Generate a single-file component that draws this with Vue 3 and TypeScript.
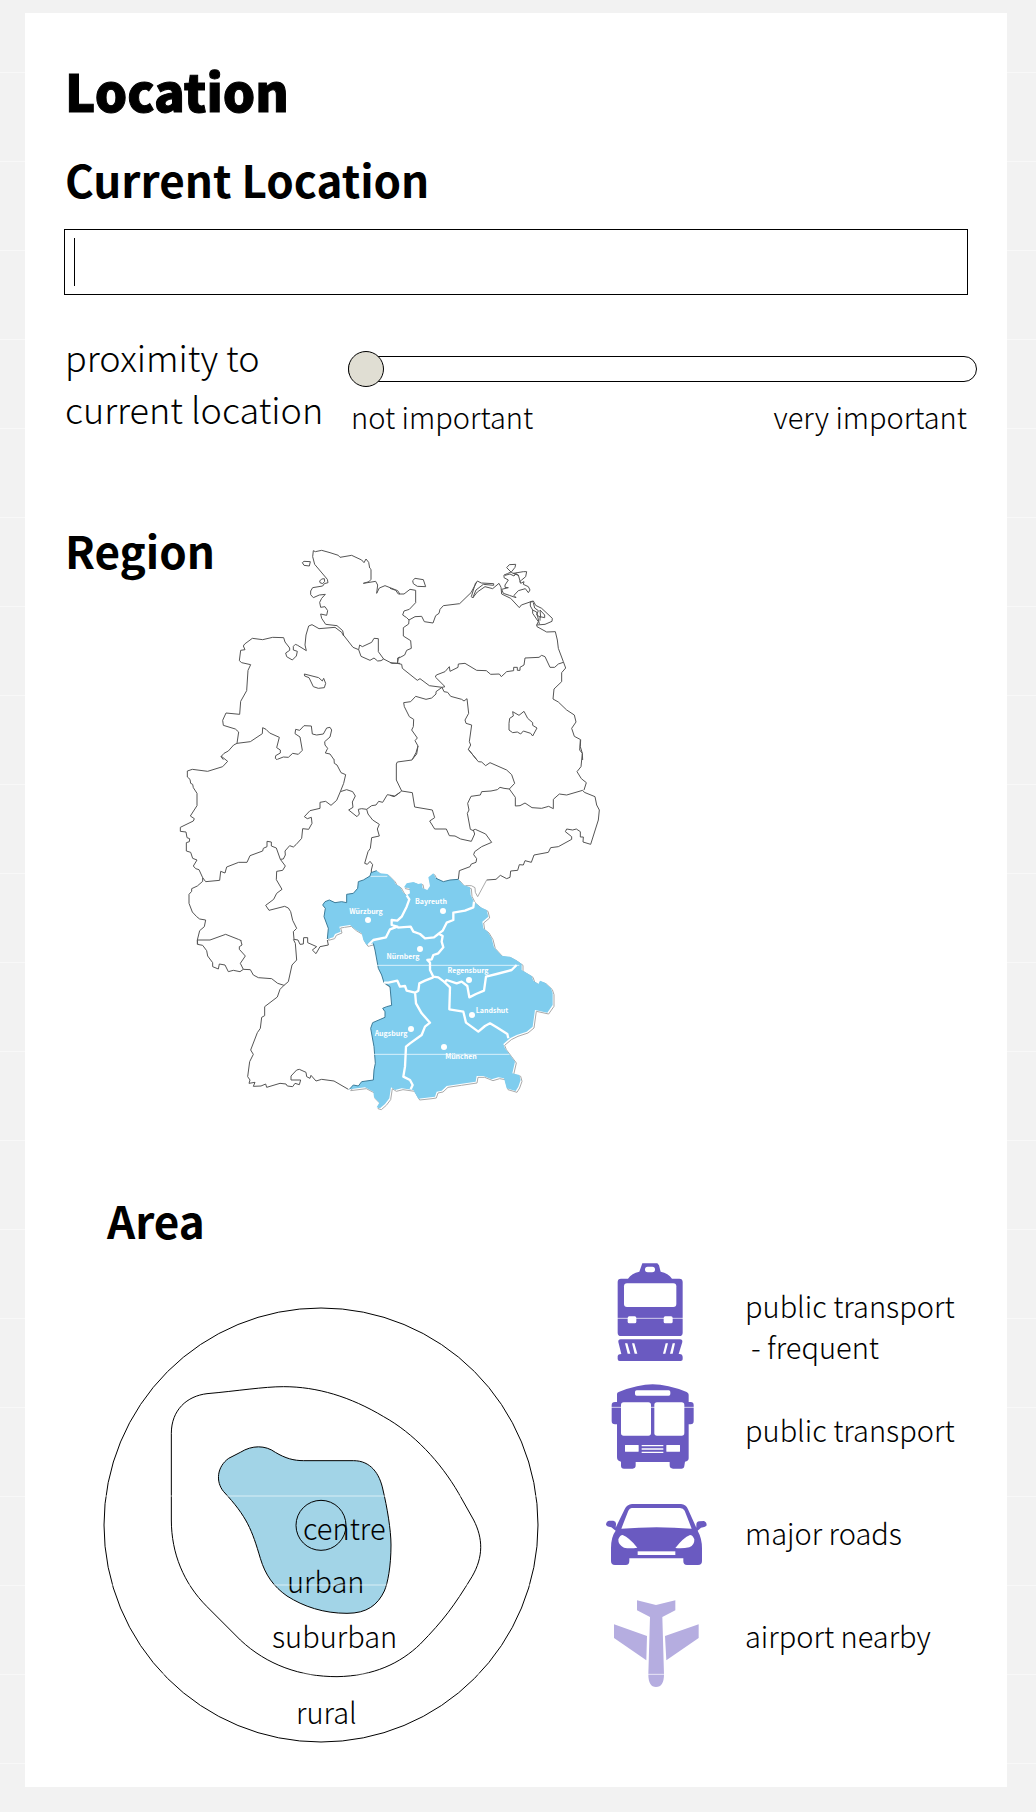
<script setup lang="ts">
import { ref } from 'vue'

interface City {
  name: string
  dot: [number, number]
  label: [number, number]
}

const currentLocation = ref('')
const proximity = ref(0)

const cities: City[] = [
  { name: 'Würzburg', dot: [368, 920], label: [366, 914] },
  { name: 'Bayreuth', dot: [443, 911], label: [431, 904] },
  { name: 'Nürnberg', dot: [420, 949], label: [403, 959] },
  { name: 'Regensburg', dot: [469, 980], label: [468, 973] },
  { name: 'Landshut', dot: [472, 1015], label: [492, 1013] },
  { name: 'Augsburg', dot: [411, 1029], label: [391, 1036] },
  { name: 'München', dot: [444, 1047], label: [461, 1059] },
]

const bavaria =
  'M45 125L58 120L75 128L95 125L110 128V103L130 100L143 85L145 65L160 60L180 48L183 38L200 32L210 40L232 42L252 62L257 72L270 80L280 98L290 106L300 100L298 85L282 82L290 70L310 66L325 72L335 70L338 85L352 90L360 78L355 52L370 40L378 55L400 65L420 60L445 58L460 75L480 82L482 105L492 125L512 142L530 150L535 170L517 185L520 205L533 215L545 235L552 262L575 287L600 290L618 300L635 312L635 330L665 348L670 362L685 372L690 362L705 368L723 385L728 400V435L712 458L675 450L668 500L650 515L620 525L600 535L580 552L585 565L600 585L615 605L607 640L628 645L632 660L625 680L617 693L590 685L582 655L565 652L545 658L520 648H500L497 665L450 672L410 678L395 692L380 695L375 710L362 712L325 716L310 690L275 685L255 690L243 682L238 715L225 732L210 745L200 742L208 728L192 712L190 695L165 682L118 688L130 675L145 678L155 665L190 660L192 630L196 610L192 560L182 505L188 488L225 472V455L218 445L230 440L245 436L240 380L222 368L215 345L205 325L195 270L190 250L170 255L160 240L155 220L135 208L120 195L100 198L88 200L92 215L75 222L70 232L52 237L55 205L42 170L46 145L38 135Z'
</script>

<template>
  <div class="page">
    <main class="card">
      <h1>Location</h1>

      <section>
        <h2 class="current-title"><label for="current-location">Current Location</label></h2>
        <div class="field">
          <input id="current-location" v-model="currentLocation" type="text" />
          <span v-if="!currentLocation" class="caret" aria-hidden="true"></span>
        </div>

        <div class="proximity">
          <label for="proximity" class="proximity-label">proximity to<br />current location</label>
          <div class="slider">
            <input id="proximity" v-model.number="proximity" type="range" min="0" max="100" />
            <div class="scale">
              <span>not important</span>
              <span>very important</span>
            </div>
          </div>
        </div>
      </section>

      <section class="region">
        <h2>Region</h2>
        <svg class="map" viewBox="170 540 440 580" role="img" aria-label="Map of Germany with Bavaria selected">
          <svg class="borders" x="170" y="530" width="230" height="230" viewBox="0 0 690 690">
            <path d="M430 62L436 65L455 61L480 68L505 76L510 82L545 76L575 90L582 98L588 87L596 97L599 114L603 118V148L597 155L580 160L617 154L623 165L620 190L628 174L645 167L683 182L690 193" />
            <path d="M430 62L428 80L434 103L472 148L474 158L463 161L458 168L428 173L422 183V194L430 203L448 195L466 193L455 205L449 217L452 232L465 230L473 242L470 256L452 252L455 265L467 283L501 287L518 302L521 316L549 352L566 359" />
            <path d="M409 362L405 345L408 315L416 288L426 284L447 296L495 292L515 307L521 318" />
            <path d="M397 98L402 106L418 108L421 95L402 94ZM449 153L455 147L463 146L464 154L458 161L450 158Z" />
            <path d="M409 362L383 346L376 343L370 349V360L382 364L379 378L367 390L350 380L347 369L359 361V354L345 336L341 323L308 322L278 329L247 325L224 342L220 348L225 359L212 361L208 392L215 398L242 404L234 421L230 482L212 514L209 553L168 549L158 571L160 586L196 597L206 606L201 640L241 635L277 611L278 593L288 598L299 609L328 622L320 653L331 660V669L317 677L316 685L322 690" />
            <path d="M403 432L446 443L457 453L461 445L467 460L463 473L445 475L430 470L417 443L404 438Z" />
            <path d="M566 359L569 345L577 350L605 337L612 325L625 326V365L641 387L633 392L623 393L612 384L600 391L573 379L566 359M641 387L666 400H690M683 400V384L690 381" />
            <path d="M201 640L191 645L175 663L162 670L153 680L160 689" />
            <path d="M322 688L340 681L355 682L368 670L385 673L397 661L390 621L375 611L377 598L389 601L402 587L424 588L427 612L440 615L460 612L470 594L480 592L485 600L480 621L464 635L465 645L473 655L466 669L480 672L492 689" />
          </svg>
          <svg class="borders" x="390" y="530" width="230" height="230" viewBox="0 0 690 690">
            <path d="M0 175L17 181L25 192H42L60 178L77 181V218L58 238L42 243L38 255L50 263L57 270L56 282L40 293V318L62 332L64 355L50 361L44 375L25 385L22 400L0 398" />
            <path d="M68 152L75 145L100 149L107 170L82 169L70 161Z" />
            <path d="M57 270L75 260L95 259L103 275L129 279L137 257L147 250L150 238L160 227L209 221L243 188L262 153L274 159L311 161V166L280 163L258 180L248 204L244 200L250 180L257 158M248 204L262 186L285 170L308 176L327 160L333 172L335 192L362 205L388 233L394 225L420 216L430 215" />
            <path d="M350 113L358 104L377 103L375 112L365 125L352 131L342 135V143L355 150L345 165V172L355 173L335 178L340 190L358 196L378 203L372 196L385 182L406 176L415 188L420 180L415 170L400 163L402 155L392 160L385 135L370 130L400 125L410 125L407 140L395 150L388 156M350 113L365 128L385 136M345 136L360 132L372 138L380 128" />
            <path d="M421 215L430 213L437 226L455 235L487 265L486 274L465 283L440 285L445 275L428 250V240L421 228ZM430 218L434 234L445 242L440 255L452 262L450 240L464 255V263L450 260V272M428 240L440 246L448 282M440 285L441 290L470 306L496 305L502 330L505 355L520 395L527 414L515 428V455L492 477L489 507L505 516L530 540L553 555L558 576L545 595L553 619L572 629L571 650L577 670L578 690" />
            <path d="M520 397L505 402L494 412H480L465 380L455 376L447 382L405 384L402 405L390 412V421H382V412H371V422L350 425L334 440L328 432L302 433L289 422L260 421L225 400L205 402L204 412L180 424L178 410L165 425L139 435L136 441L165 470L156 472L118 467L90 446L82 451L37 415L35 403L22 400" />
            <path d="M156 472L138 485V492L125 504L108 508L77 499L62 515L41 518L43 530L58 560L71 568L70 590L65 600L82 624L75 632L84 648L80 672L67 688" />
            <path d="M156 472L162 485L173 487L182 499L215 508L222 513L231 506L236 550L225 570L228 580L245 585L238 635L242 645L235 658L260 689" />
            <path d="M368 545L387 556L402 544L413 565L428 578V586L441 594L428 618L422 610L400 603L392 612L382 606L368 608L357 600V580L359 565L370 558Z" />
          </svg>
          <svg class="borders" x="170" y="740" width="230" height="230" viewBox="0 0 690 690">
            <path d="M153 48L173 64L158 80L113 94L67 88L52 93V111L60 118L62 130L68 133L70 143L81 160V197L61 228L73 236L70 243L31 262V274L48 276L51 293L59 296L58 305L49 308V333L62 337L68 355L81 360L70 378L77 386L87 389L98 413V424L82 438L65 446V454L57 463V490L67 516L80 530L89 537L107 540L103 560L89 572L82 600L83 612" />
            <path d="M492 58L493 70L501 75L513 98L527 104L521 130L511 155L500 181L483 196L467 184L450 187V205L420 212L403 230L412 236L424 232L426 250L416 268L398 266L395 295L378 314L370 321L359 317L345 333L346 345L340 357L331 358" />
            <path d="M331 358L319 324L304 318V306L291 304V320L280 325L278 333L240 347L231 367L206 367L170 381L165 399L152 394L149 421L107 425L98 413" />
            <path d="M331 358L346 378L338 391L320 394L319 419L336 448L320 460L311 478L287 496L297 511L344 499L355 504L362 515L368 541L380 565L370 575L372 598" />
            <path d="M82 600H120L167 583L205 598L214 602" />
            <path d="M372 598L384 600L390 613L400 612L401 593H413V608L440 620L427 630L438 641L450 620L475 615L472 600" />
            <path d="M511 155L530 149L548 155L556 168L547 186L549 202L536 210L561 230L568 222L565 208L575 206L590 208L594 222L608 240L628 253L622 267L628 288L605 293L601 325L594 335L584 370L592 373L600 364L608 374L604 390V405" />
            <path d="M590 208L605 197L618 195L626 184L638 187L652 164L674 168L690 157" />
          </svg>
          <svg class="borders" x="390" y="740" width="230" height="200" viewBox="0 0 690 600">
            <path d="M84 18L78 38L66 60L22 66L19 72V120L35 153L20 165L12 170L0 166" />
            <path d="M35 153L67 158L74 201L127 210L134 233L119 243L134 267H169L178 287L195 288L212 297L244 304L254 282L250 270L256 268L287 282L305 307L275 320L254 335L251 344L260 356L258 367L244 372L240 380L208 392L205 418" />
            <path d="M235 28L265 65L275 66L287 77L300 68L350 90L365 104L374 130L358 147L342 145L330 142L322 149L303 153L275 155L271 165L243 169L233 190L237 210L232 220L241 268L250 272" />
            <path d="M358 147L376 172V198L390 197L405 189L426 203L455 205L476 199L490 206V178L508 162L530 165L578 151L583 157L615 170L620 195L628 210L625 240L602 313L579 306L580 291H571V275L559 267L548 270L530 267L526 275L545 290V298L505 320L482 323L475 337L432 345L424 367L405 362L400 375L388 374L383 391L362 393L360 412L350 416L331 406L318 418L290 420" />
            <path class="faint" d="M290 420L263 470L256 457L255 443L244 437H226" />
            <path d="M571 0L569 30L577 40L573 80L561 95L574 116L589 128L582 150" />
          </svg>
          <svg class="borders" x="180" y="900" width="200" height="220" viewBox="0 0 600 660">
            <path d="M52 121V133L68 136L80 152L83 168L98 188V200L115 207L118 192L135 195L145 215L160 211L180 215L190 208L181 190L196 168L178 148V140L186 135L182 120" />
            <path d="M190 208L211 209L220 225L235 233L275 236L293 250L312 256L325 245L336 195L350 180L346 130L340 118" />
            <path d="M312 256L300 268L292 291L254 320V347L245 352L241 385L232 398L212 450L220 463L209 485L203 530L210 540L207 550L225 547L220 559L243 558L257 552L260 562L300 550L318 552L322 558L338 560L345 550L358 554L362 540L333 540V528L350 510L358 508L378 517L380 530L390 535L393 526L408 543L425 538L462 543L505 568" />
          </svg>
          <svg class="bavaria" x="310" y="860" width="260" height="260" viewBox="0 0 780 780">
            <path class="shadow-line" transform="translate(4 4)" :d="bavaria" />
            <path class="state" :d="bavaria" />
            <path class="coast" d="M118 688L130 675L145 678L155 665L190 660L192 630L196 610L192 560L182 505L188 488L225 472V455L218 445L230 440L245 436L240 380L222 368L215 345L205 325L195 270L190 250M52 237L55 205L42 170L46 145L38 135L45 125L58 120L75 128L95 125L110 128V103L130 100L143 85L145 65L160 60L180 48L183 38L200 32M378 55L400 65L420 60L445 58" />
            <path class="district" d="M290 106L298 118L290 140L275 170L262 182L245 180V195L262 200L240 208L228 232L190 240L175 255M262 203L302 200L310 215L330 222L345 235L372 232L385 222L398 212L410 188L430 180V158L465 152L490 142L492 125M388 222L398 228L395 245L400 262L385 280L370 285L365 298L352 300L360 308V330L370 350L385 352L402 365L420 382L418 448L460 455L468 488L505 515L525 498L540 490L560 502L592 522L595 535M402 370L410 360L440 370L455 365L472 378L478 412L498 402L522 392L528 350L560 342L605 330L620 315M370 352L345 362L328 370L325 392L315 398L290 392L285 378L270 380L262 362L235 368L222 368M315 395L318 430L335 460L360 488L345 500L335 525L300 550L288 560L285 620L280 650L300 660L308 675L302 688" />
            <path class="seam" d="M182 49H232M200 316H628M192 583H598" />
          </svg>
          <g v-for="city in cities" :key="city.name" class="city">
            <circle :cx="city.dot[0]" :cy="city.dot[1]" r="3" />
            <text :x="city.label[0]" :y="city.label[1]">{{ city.name }}</text>
          </g>
        </svg>
      </section>

      <section class="area">
        <div class="zones">
          <h2>Area</h2>
          <svg class="rings" viewBox="0 0 436 436" role="img" aria-label="Area types from centre to rural">
            <svg class="ring-lines" width="436" height="436" viewBox="38 51 1308 1308">
              <circle cx="692" cy="705" r="651" />
              <path d="M350 311C290 318 243 360 243 430V690C243 790 280 880 350 950L450 1050C530 1125 630 1160 740 1160C850 1158 930 1120 990 1062C1060 990 1090 950 1145 860C1180 800 1178 745 1150 690L1105 610C1050 515 970 430 880 380C780 320 680 290 580 290C520 290 440 303 350 311Z" />
              <path class="chosen" d="M450 487C485 465 525 465 555 487C585 505 610 512 640 512H790C840 512 868 550 878 600C890 650 902 720 902 765C902 830 892 880 882 903C862 945 830 970 770 970C700 970 640 950 590 918C550 890 525 855 510 805C485 720 470 680 400 605C375 575 380 530 415 505Z" />
              <circle cx="692" cy="706" r="75" />
            </svg>
            <text x="200" y="233">centre</text>
            <text x="184" y="286">urban</text>
            <text x="169" y="341">suburban</text>
            <text x="193" y="417">rural</text>
            <path class="seam" d="M0 189H436M0 278H436M0 367H436" />
          </svg>
        </div>

        <ul class="transport">
          <li>
            <button type="button" class="first" aria-pressed="true">
              <svg class="icon" viewBox="48 30 306 354" aria-hidden="true">
                <path d="M157 40H202L207 46L212 65Q235 70 246 86H268Q278 86 278 96V248Q278 258 268 258H93Q83 258 83 248V96Q83 86 93 86H114Q125 70 148 65Z" />
                <path d="M92 268H270Q278 268 277 276L266 312H270Q278 313 278 320V328Q278 333 272 333H89Q83 333 83 327V319Q84 312 94 312L85 276Q84 268 92 268Z" />
                <g class="cut">
                  <rect x="165" y="50" width="30" height="17" rx="8" />
                  <rect x="102" y="100" width="157" height="71" rx="9" />
                  <rect x="113" y="199" width="26" height="21" rx="5" />
                  <rect x="221" y="199" width="27" height="21" rx="5" />
                  <path d="M105 280H112L121 311H113ZM126 280H133L142 311H134ZM227 280H234L226 311H219ZM248 280H255L248 311H240Z" />
                </g>
                <path class="seam" d="M80 205H282" />
              </svg>
              <span class="two-line">public transport<br /><span class="sub">- frequent</span></span>
            </button>
          </li>
          <li>
            <button type="button" aria-pressed="true">
              <svg class="icon" viewBox="48 384 306 309" aria-hidden="true">
                <path d="M81 432Q81 428 86 426Q145 403 188 403Q232 403 290 426Q296 429 296 434V456H302Q311 456 311 465V513Q311 523 302 523H296V625Q296 634 285 635L283 648Q282 656 274 656H249Q239 656 239 646V636H137V646Q137 656 128 656H102Q93 656 93 647V635Q81 633 81 622V523H75Q65 523 65 513V466Q65 456 75 456H81Z" />
                <g class="cut">
                  <rect x="135" y="421" width="106" height="16" rx="5" />
                  <rect x="93" y="457" width="90" height="100" rx="8" />
                  <rect x="193" y="457" width="90" height="100" rx="8" />
                  <rect x="105" y="585" width="41" height="20" rx="1" />
                  <rect x="229" y="585" width="41" height="20" rx="1" />
                  <path d="M155 585H220V589H155ZM155 595H220V599H155ZM155 605H220V609H155Z" />
                </g>
                <path class="seam" d="M62 472H314" />
              </svg>
              <span>public transport</span>
            </button>
          </li>
          <li>
            <button type="button" aria-pressed="true">
              <svg class="icon" viewBox="48 3 306 309" aria-hidden="true">
                <path d="M77 152L64 142Q48 140 48 133Q50 122 58 122H70Q79 124 78 133L77 143L104 88Q111 73 126 72H273Q288 73 294 88L319 143V134Q319 125 328 124L342 123Q350 126 350 136Q348 141 333 143L323 152Q336 175 336 205V243Q336 255 324 255H291Q280 255 280 243V235H118V243Q118 255 107 255H75Q63 255 63 243V205Q63 170 77 152Z" />
                <g class="cut">
                  <path d="M125 84H270Q280 85 284 92L305 146Q200 137 94 146L115 92Q119 85 125 84Z" />
                  <path d="M85 178Q90 165 98 165Q118 173 142 203Q120 206 102 203Q84 195 85 178ZM313 178Q308 165 300 165Q280 173 256 204Q278 206 298 202Q314 195 313 178Z" />
                  <rect x="143" y="214" width="113" height="11" />
                </g>
              </svg>
              <span>major roads</span>
            </button>
          </li>
          <li>
            <button type="button" aria-pressed="false">
              <svg class="icon" viewBox="48 312 306 309" aria-hidden="true">
                <path d="M141 361L198 375L256 361V391L217 411L222 583Q222 621 198 621Q175 621 175 583L180 411L141 391ZM72 433L171 468L169 541L72 474ZM326 433V474L229 541L225 468Z" />
                <path class="seam" d="M170 583H226" />
              </svg>
              <span>airport nearby</span>
            </button>
          </li>
        </ul>
      </section>
    </main>
  </div>
</template>

<style>
body {
  margin: 0;
  background: #f2f2f2;
}
</style>

<style scoped>
.page {
  box-sizing: border-box;
  padding: 13px 29px 25px 25px;
  background: repeating-linear-gradient(to bottom, #f2f2f2 0 72px, #f8f8f8 72px 73px, #f2f2f2 73px 89px);
  color: #000;
  font-family: 'Noto Sans CJK SC', 'Noto Sans', sans-serif;
  font-weight: 300;
}

.card {
  box-sizing: border-box;
  padding: 47px 30px 44px 39px;
  background: #fff;
}

h1,
h2 {
  margin: 0;
  padding-left: 1px;
}

h1 {
  font-size: 51px;
  line-height: 60px;
  font-weight: 900;
  -webkit-text-stroke: 1px #000;
}

h2 {
  font-size: 44px;
  line-height: 56px;
  font-weight: 700;
}

.current-title {
  margin-top: 31px;
}

.field {
  position: relative;
  margin: 22px 9px 0 0;
}

.field input {
  display: block;
  box-sizing: border-box;
  width: 100%;
  height: 66px;
  padding: 0 10px;
  border: 1px solid #000;
  border-radius: 0;
  background: #fff;
  font: inherit;
  font-size: 29px;
  outline: none;
}

.caret {
  position: absolute;
  top: 9px;
  left: 10px;
  width: 1px;
  height: 48px;
  background: #000;
}

.proximity {
  display: flex;
  gap: 20px;
  margin-top: 35px;
}

.proximity-label {
  flex: none;
  width: 263px;
  padding-left: 1px;
  font-size: 36px;
  line-height: 52px;
  white-space: nowrap;
}

.slider {
  flex: 1;
  padding-top: 21px;
}

.slider input {
  display: block;
  width: 100%;
  height: 36px;
  margin: 0;
  background: none;
  appearance: none;
}

.slider input::-webkit-slider-runnable-track {
  box-sizing: border-box;
  height: 26px;
  border: 1px solid #000;
  border-radius: 13px;
  background: #fff;
}

.slider input::-webkit-slider-thumb {
  box-sizing: border-box;
  width: 36px;
  height: 36px;
  margin: -6px 0 0 -1px;
  border: 1px solid #000;
  border-radius: 50%;
  background: #e0ded3;
  appearance: none;
}

.scale {
  display: flex;
  justify-content: space-between;
  margin: 9px 10px 0 3px;
  font-size: 29px;
  line-height: 40px;
}

.region {
  display: grid;
  margin-top: 86px;
}

.region h2,
.map {
  grid-area: 1 / 1;
}

.map {
  width: 440px;
  height: 580px;
  margin: 18px 0 0 106px;
}

.borders path {
  fill: none;
  stroke: #555;
  stroke-width: 3;
  stroke-linejoin: round;
}

.borders .faint {
  stroke: #aaa;
}

.state {
  fill: #7fcdee;
}

.shadow-line {
  fill: none;
  stroke: #aaa;
  stroke-width: 3;
}

.coast {
  fill: none;
  stroke: #3d7c99;
  stroke-width: 3;
}

.district {
  fill: none;
  stroke: #fff;
  stroke-width: 7;
  stroke-linejoin: round;
}

.bavaria .seam,
.icon .seam {
  stroke: #fff;
  stroke-opacity: 0.7;
  stroke-width: 3;
}

.city {
  fill: #fff;
  font-size: 7px;
  font-weight: 700;
  text-anchor: middle;
}

.area {
  display: flex;
  margin-top: 72px;
}

.zones {
  flex: none;
  width: 436px;
  margin-left: 39px;
}

.zones h2 {
  padding-left: 4px;
}

.rings {
  display: block;
  width: 436px;
  height: 436px;
  margin-top: 59px;
  font-size: 29px;
}

.ring-lines {
  fill: none;
  stroke: #000;
  stroke-width: 3;
}

.ring-lines .chosen {
  fill: #a2d4e7;
}

.rings .seam {
  stroke: #fff;
  stroke-opacity: 0.6;
}

.transport {
  margin: 68px 0 0 67px;
  padding: 0;
  list-style: none;
}

.transport button {
  display: flex;
  align-items: center;
  gap: 37px;
  width: 100%;
  height: 103px;
  padding: 0;
  border: 0;
  background: none;
  color: inherit;
  font: inherit;
  font-size: 29px;
  line-height: 41px;
  text-align: left;
  white-space: nowrap;
}

.transport .first {
  height: 118px;
}

.two-line {
  padding-top: 14px;
}

.sub {
  margin-left: 6px;
}

.icon {
  flex: none;
  width: 102px;
  height: 100%;
  fill: #6a5ac1;
}

[aria-pressed='false'] .icon {
  fill: #b5ade0;
}

.icon .cut {
  fill: #fff;
}
</style>
